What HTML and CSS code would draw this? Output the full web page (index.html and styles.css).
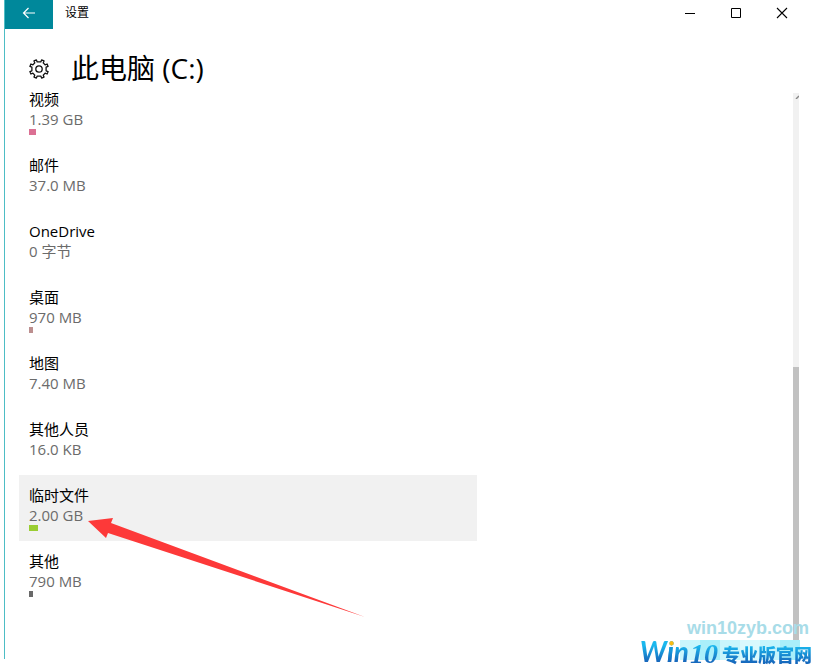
FILE: index.html
```html
<!DOCTYPE html>
<html lang="zh-CN">
<head>
<meta charset="utf-8">
<title>设置</title>
<link rel="stylesheet" href="styles.css">
</head>
<body>
<div class="window">
  <header class="titlebar">
    <button class="back" aria-label="返回">
      <svg width="14" height="12" viewBox="0 0 14 12"><path d="M13 6H1.5M6.500 1L1.500 6l5 5" fill="none" stroke="#fff" stroke-width="1.200"/></svg>
    </button>
    <span class="app-name">设置</span>
    <div class="controls">
      <button class="control" aria-label="最小化"><svg width="12" height="12" viewBox="0 0 12 12"><path d="M1 6.500h10" stroke="#000"/></svg></button>
      <button class="control" aria-label="最大化"><svg width="12" height="12" viewBox="0 0 12 12"><path d="M1.500 1.500h9v9h-9z" fill="none" stroke="#000"/></svg></button>
      <button class="control" aria-label="关闭"><svg width="12" height="12" viewBox="0 0 12 12"><path d="M1 1l10 10M11 1L1 11" stroke="#000" stroke-width="1.100"/></svg></button>
    </div>
  </header>
  <div class="heading">
    <svg class="gear" width="20" height="20" viewBox="0 0 20 20" fill="none" stroke="#111" stroke-width="1.300" stroke-linejoin="round"><path d="M8.200 2.900L7.400 .9L5 1.900L5.800 3.900L3.900 5.800L1.900 5L.9 7.400L2.900 8.200V11.800L.9 12.600L1.900 15L3.900 14.200L5.800 16.100L5 18.100L7.400 19.100L8.200 17.100H11.800L12.600 19.100L15 18.100L14.200 16.100L16.100 14.200L18.100 15L19.100 12.600L17.100 11.800V8.200L19.100 7.400L18.100 5L16.100 5.800L14.200 3.900L15 1.900L12.600 .9L11.800 2.900Z"/><circle cx="10" cy="10" r="3.200"/></svg>
    <h1>此电脑 (C:)</h1>
  </div>
  <main class="content">
    <ul class="usage">
      <li><a class="item" href="#"><span class="name">视频</span><span class="size">1.39 GB</span><span class="bar video"></span></a></li>
      <li><a class="item" href="#"><span class="name">邮件</span><span class="size">37.0 MB</span></a></li>
      <li><a class="item" href="#"><span class="name">OneDrive</span><span class="size">0 字节</span></a></li>
      <li><a class="item" href="#"><span class="name">桌面</span><span class="size">970 MB</span><span class="bar desktop"></span></a></li>
      <li><a class="item" href="#"><span class="name">地图</span><span class="size">7.40 MB</span></a></li>
      <li><a class="item" href="#"><span class="name">其他人员</span><span class="size">16.0 KB</span></a></li>
      <li><a class="item active" href="#"><span class="name">临时文件</span><span class="size">2.00 GB</span><span class="bar temp"></span>
        <svg class="arrow" width="278" height="100" viewBox="0 0 278 100"><path d="M0 4L25 1L23 6L277 100L20 16L18 21Z" fill="#fd3939"/></svg></a></li>
      <li><a class="item" href="#"><span class="name">其他</span><span class="size">790 MB</span><span class="bar other"></span></a></li>
    </ul>
    <div class="scrollbar">
      <svg width="6" height="6" viewBox="0 0 6 6"><path d="M3 6L6 3" stroke="#888" stroke-width="1.400"/></svg>
      <div class="thumb"></div>
    </div>
  </main>
</div>
<div class="watermark">
  <span class="site">win10zyb.com</span>
  <div class="brand"><span class="win">W<span class="dotted">i</span>n</span><span class="ten">10</span><span class="official">专业版官网</span></div>
</div>
</body>
</html>
```
FILE: styles.css
```css
* { box-sizing: border-box; }

body {
  margin: 0;
  min-height: 100vh;
  background: #fff;
  color: #000;
  font: 15px/20px "Open Sans", "Noto Sans CJK SC", sans-serif;
}

.window {
  display: flex;
  flex-direction: column;
  height: calc(100vh - 9px);
  margin: 0 12px 0 4px;
  border-left: 1px solid #4dbdc5;
}

.titlebar {
  display: flex;
  height: 29px;
}

button {
  display: flex;
  align-items: center;
  justify-content: center;
  padding: 0;
  border: 0;
  background: none;
}

.back {
  width: 48px;
  padding-bottom: 4px;
  background: #00889b;
}

.app-name {
  margin-left: 12px;
  font-size: 12px;
  line-height: 26px;
}

.controls {
  display: flex;
  height: 26px;
  margin-left: auto;
}

.control { width: 46px; }

.heading {
  display: flex;
  align-items: center;
  gap: 22px;
  height: 60px;
  padding: 20px 24px 0;
}

h1 {
  margin: 0;
  padding-bottom: 2px;
  font-size: 28px;
  font-weight: 400;
  line-height: 38px;
}

.content {
  display: flex;
  flex: 1;
  justify-content: space-between;
  min-height: 0;
  padding: 0 6px 0 14px;
}

.usage {
  flex: 1;
  max-width: 458px;
  margin: 0;
  padding: 0;
  list-style: none;
}

.item {
  position: relative;
  display: flex;
  flex-direction: column;
  height: 66px;
  padding: 10px 10px 0;
  color: #000;
  text-decoration: none;
}

li:first-child .item {
  height: 56px;
  padding-top: 0;
}

.active { background: #f1f1f1; }

.size { color: #6b6b6b; }

.bar {
  width: 4px;
  height: 6px;
}

.video { width: 7px; background: #db7093; }
.desktop { background: #bc8f8f; }
.temp { width: 9px; background: #9acd32; }
.other { background: #696969; }

.arrow {
  position: absolute;
  z-index: 1;
  top: 42px;
  left: 69px;
}

.scrollbar {
  display: flex;
  flex-direction: column;
  justify-content: space-between;
  width: 6px;
  margin: 4px 0 19px;
  background: #f1f1f1;
}

.thumb {
  height: 50%;
  background: #c1c1c1;
}

.watermark {
  position: absolute;
  right: 5px;
  bottom: 0;
  display: flex;
  flex-direction: column;
  align-items: flex-end;
}

.site {
  padding: 0 3px 2px 0;
  color: #a8dce8;
  font: bold 18px/20px "Liberation Sans", sans-serif;
}

.brand {
  display: flex;
  align-items: flex-start;
  height: 28px;
  background: linear-gradient(90deg, #c9f6fc 20px, #a9effa 20px 40px, #c9f6fc 40px 60px, #d9f9fd 60px 80px, #c5f5fc 80px 100px, #a9effa 100px) right 12px top 0 / 120px 20px no-repeat;
}

.win, .ten, .official {
  background: linear-gradient(#1bb8ee 20%, #1769bd 80%);
  background-clip: text;
  color: transparent;
}

.win {
  padding: 0 1px 4px 0;
  font: italic bold 28px/22px Lato, sans-serif;
}

.dotted {
  background: linear-gradient(#fdbb13 36%, #1695d9 36% 50%, #1769bd 80%);
  background-clip: text;
}

.ten {
  padding-right: 4px;
  font: italic bold 28px/28px "Liberation Serif", serif;
}

.official {
  font: 900 18px/28px "Noto Sans CJK SC", sans-serif;
}
```
